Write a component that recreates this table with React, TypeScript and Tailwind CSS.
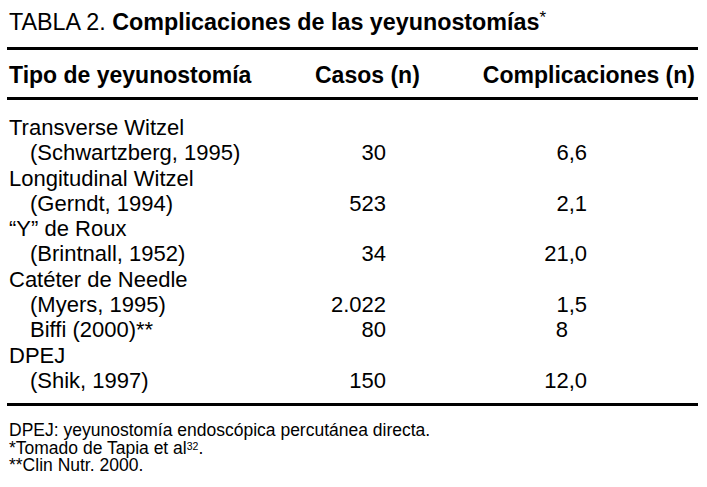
const font = { fontFamily: '"Liberation Sans", Arial, sans-serif' };

type Row = { label: string; indent?: boolean; casos?: string; comp?: string; compPad?: string };

// Filas de la tabla, una por línea visual
const rows: Row[] = [
  { label: "Transverse Witzel" },
  { label: "(Schwartzberg, 1995)", indent: true, casos: "30", comp: "6,6" },
  { label: "Longitudinal Witzel" },
  { label: "(Gerndt, 1994)", indent: true, casos: "523", comp: "2,1" },
  { label: "“Y” de Roux" },
  { label: "(Brintnall, 1952)", indent: true, casos: "34", comp: "21,0" },
  { label: "Catéter de Needle" },
  { label: "(Myers, 1995)", indent: true, casos: "2.022", comp: "1,5" },
  { label: "Biffi (2000)**", indent: true, casos: "80", comp: "8", compPad: "pr-[19px]" },
  { label: "DPEJ" },
  { label: "(Shik, 1997)", indent: true, casos: "150", comp: "12,0" },
];

export default function App() {
  return (
    <div className="w-[707px] h-[487px] bg-white text-black overflow-hidden" style={font}>
      <div className="ml-[7px] w-[691px] pt-[10px]">
        {/* Título */}
        <p className="pl-[2px] text-[23.3px] leading-[25px] whitespace-nowrap">
          TABLA 2. <span className="font-bold">Complicaciones de las yeyunostomías</span>
          <span className="inline-block align-top text-[17px] leading-[17px] -mt-[1px]">*</span>
        </p>
        <div className="mt-[12px] h-[3px] bg-black" />

        {/* Encabezado */}
        <div className="mt-[13px] flex text-[23px] leading-[25px] font-bold whitespace-nowrap">
          <span className="w-[308px] pl-[2px]">Tipo de yeyunostomía</span>
          <span>Casos (n)</span>
          <span className="ml-auto pr-[3px]">Complicaciones (n)</span>
        </div>
        <div className="mt-[9px] h-[3px] bg-black" />

        {/* Cuerpo */}
        <div className="mt-[15px] grid grid-cols-[251px_128px_201px] text-[22px] leading-[25.3px] whitespace-nowrap">
          {rows.map((r, i) => (
            <div key={i} className="contents">
              <span className={r.indent ? "pl-[23px]" : "pl-[2px]"}>{r.label}</span>
              <span className="text-right">{r.casos ?? ""}</span>
              <span className={"text-right " + (r.compPad ?? "")}>{r.comp ?? ""}</span>
            </div>
          ))}
        </div>
        <div className="mt-[10px] h-[3px] bg-black" />

        {/* Notas */}
        <div className="mt-[16px] pl-[2px] text-[17.5px] leading-[17.5px] whitespace-nowrap">
          <p>DPEJ: yeyunostomía endoscópica percutánea directa.</p>
          <p>
            *Tomado de Tapia et al
            <span className="inline-block align-top text-[10.5px] leading-[11px] mt-[1px]">32</span>.
          </p>
          <p>**Clin Nutr. 2000.</p>
        </div>
      </div>
    </div>
  );
}
